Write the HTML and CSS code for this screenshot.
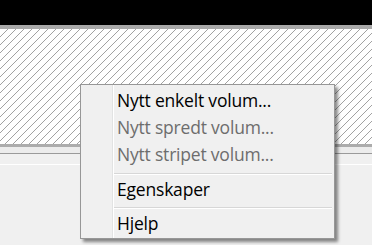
FILE: index.html
```html
<!DOCTYPE html>
<html lang="nb">
<head>
    <meta charset="UTF-8">
    <title>Diskbehandling</title>
    <link rel="stylesheet" href="styles.css">
</head>
<body>
    <div class="window">
        <!-- Øverste svarte felt -->
        <div class="top-bar"></div>
        <div class="top-edge"></div>
        <!-- Ledig plass, skravert -->
        <div class="free-space">
            <svg class="hatch" width="100%" height="100%">
                <defs>
                    <pattern id="diag" width="8" height="8" patternUnits="userSpaceOnUse">
                        <path d="M-1 9 L9 -1 M-1 1 L1 -1 M7 9 L9 7" stroke="#a2a2a2" stroke-width="1"/>
                    </pattern>
                </defs>
                <rect width="100%" height="100%" fill="url(#diag)"/>
            </svg>
        </div>
        <div class="bottom-edge"></div>
        <div class="gap"></div>
        <div class="lower-panel">
            <div class="lower-line"></div>
        </div>
    </div>

    <!-- Hurtigmeny -->
    <ul class="context-menu">
        <li class="menu-item">Nytt enkelt volum...</li>
        <li class="menu-item disabled">Nytt spredt volum...</li>
        <li class="menu-item disabled">Nytt stripet volum...</li>
        <li class="menu-sep"></li>
        <li class="menu-item">Egenskaper</li>
        <li class="menu-sep second"></li>
        <li class="menu-item">Hjelp</li>
    </ul>
</body>
</html>
```

FILE: styles.css
```css
body {
    margin: 0;
    padding: 0;
    width: 372px;
    height: 245px;
    overflow: hidden;
    background: #f0f0f0;
    font-family: 'Open Sans', 'Noto Sans', sans-serif;
    position: relative;
}
.window {
    display: flex;
    flex-direction: column;
    height: 245px;
}
.top-bar {
    height: 25px;
    background: #000000;
}
.top-edge {
    height: 4px;
    background: #a9a9a9;
}
.free-space {
    height: 115px;
    background: #ffffff;
}
.hatch {
    display: block;
}
.bottom-edge {
    height: 3px;
    background: #acacac;
}
.gap {
    height: 6px;
    background: #ececec;
    border-bottom: 1px solid #9a9a9a;
}
.lower-panel {
    flex-grow: 1;
    background: #f0f0f0;
    padding-top: 10px;
}
.lower-line {
    height: 1px;
    background: #ffffff;
}
.context-menu {
    position: absolute;
    left: 80px;
    top: 84px;
    width: 253px;
    margin: 0;
    padding: 2px 0 1px 0;
    list-style: none;
    background: #f0f0f0;
    border: 1px solid #979797;
    box-shadow: 3px 3px 3px rgba(0, 0, 0, 0.45);
    background-image: linear-gradient(to right, transparent 31px, #e2e3e3 31px, #e2e3e3 32px, #ffffff 32px, #ffffff 33px, transparent 33px);
    font-size: 17.5px;
    letter-spacing: -0.2px;
    color: #000000;
}
.menu-item {
    height: 27px;
    line-height: 27px;
    padding-left: 36px;
    white-space: nowrap;
}
.menu-item.disabled {
    color: #6d6d6d;
}
.menu-sep {
    height: 1px;
    margin: 5px 2px 1px 33px;
    background: #d7d7d7;
    border-bottom: 1px solid #ffffff;
}
.menu-sep.second {
    margin-top: 4px;
}
```
